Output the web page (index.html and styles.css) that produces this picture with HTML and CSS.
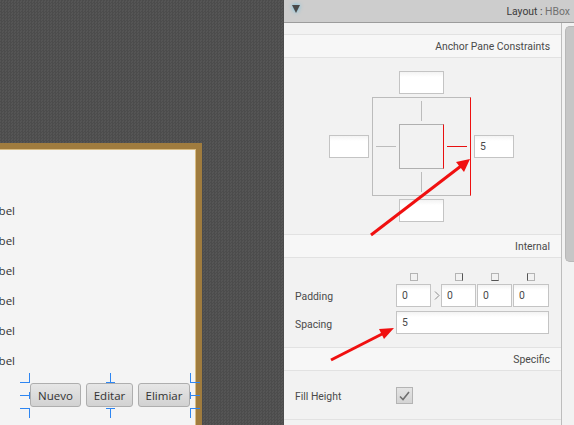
FILE: index.html
```html
<!DOCTYPE html>
<html lang="en">
<head>
    <meta charset="UTF-8">
    <title>Layout : HBox</title>
    <link rel="stylesheet" href="styles.css">
</head>
<body>
<div class="app">
    <!-- Design surface -->
    <div class="canvas">
        <div class="card">
            <div class="label-row"><span>Label</span></div>
            <div class="label-row"><span>Label</span></div>
            <div class="label-row"><span>Label</span></div>
            <div class="label-row"><span>Label</span></div>
            <div class="label-row"><span>Label</span></div>
            <div class="label-row"><span>Label</span></div>
            <div class="hbox">
                <button class="btn btn-nuevo">Nuevo</button>
                <button class="btn btn-editar">Editar</button>
                <button class="btn btn-eliminar">Elimiar</button>
                <svg class="handles" width="180" height="45" viewBox="0 0 180 45">
                    <path d="M9.5 0V10M0 9.5H10M0 22.5H10M9.5 19V26M90.5 0V10M86 9.5H95M170.5 0V10M171 9.5H180M171 22.5H180M170.5 19V26M0 35.5H10M9.5 35V45M90.5 35V45M86 35.5H95M171 35.5H180M170.5 35V45"/>
                </svg>
            </div>
        </div>
    </div>

    <!-- Inspector -->
    <div class="panel">
        <div class="panel-header">
            <svg class="toggle" width="12" height="10" viewBox="0 0 12 10"><path d="M2 1H10L6 9Z"/></svg>
            <span class="panel-title"><b>Layout :</b> HBox</span>
        </div>
        <div class="panel-main">
            <div class="panel-content">
                <div class="section-head section-first">Anchor Pane Constraints</div>
                <div class="anchor-body">
                    <div class="anchor-grid">
                        <input class="input anchor-v anchor-top" type="text" value="">
                        <input class="input anchor-h anchor-left" type="text" value="">
                        <div class="anchor-box">
                            <i class="tick tick-v tick-top"></i>
                            <i class="tick tick-h tick-left"></i>
                            <div class="anchor-inner"></div>
                            <i class="tick tick-h tick-right"></i>
                            <i class="tick tick-v tick-bottom"></i>
                        </div>
                        <input class="input anchor-h anchor-right" type="text" value="5">
                        <input class="input anchor-v anchor-bottom" type="text" value="">
                    </div>
                </div>
                <div class="section-head">Internal</div>
                <div class="form-grid internal-body">
                    <span></span>
                    <div class="pad-grid">
                        <i class="mini"></i>
                        <span></span>
                        <i class="mini mini-right"></i>
                        <i class="mini mini-bottom"></i>
                        <i class="mini mini-left"></i>
                    </div>
                    <label class="field-label">Padding</label>
                    <div class="pad-grid">
                        <input class="input" type="text" value="0">
                        <svg class="chevron" width="6" height="9" viewBox="0 0 6 9"><path d="M1 .5L5 4.500L1 8.500"/></svg>
                        <input class="input" type="text" value="0">
                        <input class="input" type="text" value="0">
                        <input class="input" type="text" value="0">
                    </div>
                    <label class="field-label field-label-spacing">Spacing</label>
                    <input class="input input-wide" type="text" value="5">
                </div>
                <div class="section-head">Specific</div>
                <div class="form-grid specific-body">
                    <label class="field-label">Fill Height</label>
                    <div class="check">
                        <svg width="11" height="10" viewBox="0 0 11 10"><path d="M1 5.500L4 8.500L10 1"/></svg>
                    </div>
                </div>
                <div class="section-end"></div>
            </div>
            <div class="scroll-track"><div class="scroll-thumb"></div></div>
        </div>
    </div>
</div>

<!-- Red arrows drawn over the screenshot -->
<svg class="arrows" width="574" height="425" viewBox="0 0 574 425">
    <path class="arrow-line" d="M371 235L461 166"/>
    <path class="arrow-head" d="M470 159L464 172L456 162Z"/>
    <path class="arrow-line" d="M331 360L384 333"/>
    <path class="arrow-head" d="M394 328L384 339L379 329Z"/>
</svg>
</body>
</html>
```

FILE: styles.css
```css
html, body {
    margin: 0;
    height: 100%;
    overflow: hidden;
}
body {
    font-family: "Open Sans", "Noto Sans", sans-serif;
    font-size: 11.500px;
    color: #333;
}
.app {
    display: flex;
    width: 574px;
    height: 425px;
}
.canvas {
    width: 284px;
    height: 425px;
    overflow: hidden;
    padding-top: 143px;
    box-sizing: border-box;
    background-color: #505050;
    background-image: repeating-conic-gradient(#4c4c4c 0 25%, #555 0 50%);
    background-size: 3px 3px;
}
.card {
    width: 202px;
    height: 300px;
    box-sizing: border-box;
    border-top: 6px solid #a07c3e;
    border-right: 6px solid #a07c3e;
    background: #f4f4f4;
    box-shadow: inset 0 1px 0 #d9bd85, inset -1px 0 0 #d9bd85;
    padding-top: 47px;
}
.label-row {
    display: flex;
    justify-content: flex-end;
    width: 15px;
    height: 30px;
    line-height: 30px;
    white-space: nowrap;
}
.hbox {
    position: relative;
    display: flex;
    gap: 5px;
    width: 160px;
    height: 24px;
    margin: 7px 0 0 30px;
}
.btn {
    height: 24px;
    padding: 0;
    font: inherit;
    color: #333;
    border: 1px solid #aeaeae;
    border-radius: 3px;
    background: linear-gradient(#e6e6e6, #d2d2d2);
}
.btn-nuevo { width: 51px; }
.btn-editar { width: 47px; }
.btn-eliminar { width: 52px; }
.handles {
    position: absolute;
    left: -10px;
    top: -10px;
}
.handles path {
    fill: none;
    stroke: #2e86f2;
    stroke-width: 1;
}
.panel {
    width: 290px;
    height: 425px;
    background: #f2f2f2;
    font-family: Roboto, "Open Sans", sans-serif;
    font-size: 10.400px;
    color: #4a4a4a;
}
.panel-header {
    display: flex;
    align-items: center;
    justify-content: space-between;
    height: 22px;
    padding: 0 4px 0 6px;
    background: #cdcdcd;
    border-bottom: 1px solid #9c9c9c;
}
.toggle {
    margin-top: -4px;
    filter: drop-shadow(0 0 2px #5cc0e8);
}
.toggle path {
    fill: #4a4a4a;
}
.panel-title {
    color: #707070;
    padding-top: 1px;
}
.panel-title b {
    font-weight: normal;
    color: #3c3c3c;
}
.panel-main {
    display: flex;
    height: 402px;
}
.panel-content {
    width: 277px;
    border-right: 1px solid #bdbdbd;
}
.section-head {
    height: 22px;
    line-height: 23px;
    padding-right: 11px;
    text-align: right;
    background: #f7f7f7;
    border-top: 1px solid #e2e2e2;
    border-bottom: 1px solid #e2e2e2;
}
.section-first {
    margin-top: 11px;
}
.anchor-body {
    height: 176px;
    box-sizing: border-box;
    padding: 13px 0 0 45px;
}
.anchor-grid {
    display: grid;
    grid-template-columns: 40px 99px 40px;
    grid-template-rows: 23px 99px 23px;
    gap: 3px;
}
.input {
    display: block;
    width: 100%;
    height: 23px;
    margin: 0;
    padding: 0 5px;
    box-sizing: border-box;
    font: inherit;
    color: #4a4a4a;
    background: linear-gradient(#f3f3f3, #fff 5px);
    border: 1px solid #c4c4c4;
    border-radius: 0;
    outline: none;
}
.anchor-v {
    width: 45px;
    justify-self: center;
    grid-column: 2;
}
.anchor-top { grid-row: 1; }
.anchor-bottom { grid-row: 3; }
.anchor-h {
    align-self: center;
    grid-row: 2;
}
.anchor-left { grid-column: 1; }
.anchor-right { grid-column: 3; }
.anchor-box {
    grid-column: 2;
    grid-row: 2;
    display: grid;
    grid-template-columns: 26px 45px 26px;
    grid-template-rows: 26px 45px 26px;
    place-items: center;
    box-sizing: border-box;
    width: 99px;
    height: 99px;
    border: 1px solid #bcbcbc;
    border-right-color: #ee1111;
}
.anchor-inner {
    grid-column: 2;
    grid-row: 2;
    box-sizing: border-box;
    width: 45px;
    height: 45px;
    border: 1px solid #b0b0b0;
    border-right-color: #e81010;
}
.tick {
    display: block;
    background: #bcbcbc;
}
.tick-v {
    width: 1px;
    height: 20px;
    grid-column: 2;
}
.tick-h {
    width: 20px;
    height: 1px;
    grid-row: 2;
}
.tick-top { grid-row: 1; }
.tick-bottom { grid-row: 3; }
.tick-left { grid-column: 1; }
.tick-right {
    grid-column: 3;
    background: #e81010;
}
.form-grid {
    display: grid;
    grid-template-columns: 101px 153px;
    align-items: center;
    padding-left: 11px;
}
.internal-body {
    grid-template-rows: 8px 23px 23px;
    row-gap: 3px;
    height: 89px;
    box-sizing: border-box;
    padding-top: 15px;
    align-content: start;
}
.internal-body .input-wide {
    margin-top: 2px;
}
.pad-grid {
    display: grid;
    grid-template-columns: 36px 9px 36px 36px 36px;
    align-items: center;
    justify-items: start;
}
.pad-grid .input {
    width: 35px;
}
.pad-grid .input:last-child {
    width: 36px;
}
.chevron {
    margin-left: 2px;
}
.chevron path {
    fill: none;
    stroke: #8a8a8a;
    stroke-width: 1;
}
.mini {
    display: block;
    box-sizing: border-box;
    width: 8px;
    height: 8px;
    margin-left: 14px;
    border: 1px solid #b4b4b4;
}
.mini-right { border-right-color: #555; }
.mini-bottom { border-bottom-color: #555; }
.mini-left { border-left-color: #555; }
.field-label {
    padding-top: 1px;
}
.field-label-spacing {
    padding-top: 5px;
}
.specific-body {
    height: 48px;
    box-sizing: border-box;
    padding-top: 16px;
    align-content: start;
}
.section-end {
    border-top: 1px solid #e2e2e2;
}
.check {
    display: flex;
    align-items: center;
    justify-content: center;
    box-sizing: border-box;
    width: 17px;
    height: 17px;
    background: linear-gradient(#e4e4e4, #d4d4d4);
    border: 1px solid #b4b4b4;
}
.check path {
    fill: none;
    stroke: #6f6f6f;
    stroke-width: 1.600;
}
.scroll-track {
    flex: 1;
    padding: 3px 0 0 3px;
}
.scroll-thumb {
    height: 236px;
    border-radius: 5px 0 0 5px;
    background: #c6c6c6;
    border: 1px solid #b8b8b8;
    border-right: 0;
    box-sizing: border-box;
}
.arrows {
    position: absolute;
    left: 0;
    top: 0;
    pointer-events: none;
}
.arrow-line {
    fill: none;
    stroke: #f01010;
    stroke-width: 3;
}
.arrow-head {
    fill: #f01010;
}
```
